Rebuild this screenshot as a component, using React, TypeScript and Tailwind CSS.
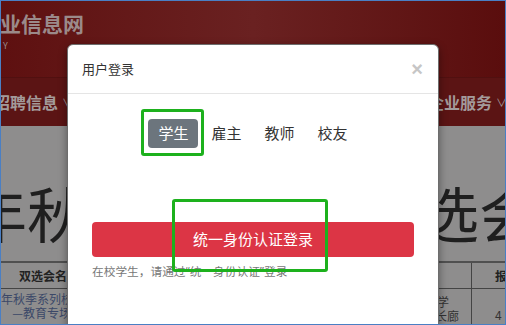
import React from "react";

const cjk = { fontFamily: '"Noto Sans CJK SC", "Noto Sans", sans-serif' };

function PageBehind() {
  return (
    <div className="flex flex-col w-full h-full">
      {/* header */}
      <div className="h-[79px] bg-gradient-to-r from-[#5e1010] via-[#6a2121] to-[#5a0d0d] flex flex-col pt-[8px]">
        <div className="ml-[-22px] text-[21px] font-bold leading-[28px] text-[#9b8a8a] whitespace-nowrap">就业信息网</div>
        <div className="pl-[2px] mt-[4px] text-[9px] leading-[10px] text-[#9b8a8a]">Y</div>
      </div>
      {/* nav */}
      <div className="h-[52px] bg-[#5b1414] border-t border-[#511010] flex items-center justify-between">
        <div className="ml-[-7px] flex items-center gap-[4px] text-[16px] font-bold text-[#a39a9a] whitespace-nowrap">
          招聘信息<span className="text-[11px] font-normal">∨</span>
        </div>
        <div className="mr-[-2px] flex items-center gap-[4px] text-[16px] font-bold text-[#a39a9a] whitespace-nowrap">
          企业服务<span className="text-[11px] font-normal">∨</span>
        </div>
      </div>
      {/* content */}
      <div className="flex-1 bg-[#8e8d8d] flex flex-col">
        <div className="h-[135px] flex justify-between items-start pt-[54px] overflow-hidden">
          <div className="ml-[-34px] text-[60px] leading-[64px] text-[#1f1f1f] whitespace-nowrap">年秋</div>
          <div className="mr-[-34px] text-[60px] leading-[64px] text-[#1f1f1f] whitespace-nowrap">选会</div>
        </div>
        <div className="border-t-2 border-[#505050] grid grid-cols-[68px_1fr_35px_33px]">
          <div className="h-[25px] pl-[18px] flex items-center text-[12px] font-bold text-[#222] whitespace-nowrap overflow-hidden">双选会名称</div>
          <div />
          <div className="border-r border-[#444]" />
          <div className="h-[25px] pl-[23px] flex items-center text-[12px] font-bold text-[#222] whitespace-nowrap overflow-hidden">报名</div>
          <div className="col-span-4 border-t border-[#444]" />
          <div className="pt-[3px] flex flex-col items-end text-[12px] leading-[14px] text-[#3b4868] whitespace-nowrap overflow-hidden">
            <span className="mr-[-4px]">4年秋季系列校</span>
            <span className="mr-[-2px]">—教育专场</span>
          </div>
          <div />
          <div className="border-r border-[#444] pt-[6px] flex flex-col text-[12px] leading-[14px] text-[#333] whitespace-nowrap overflow-hidden">
            <span>学</span>
            <span className="ml-[-2px]">长廊</span>
          </div>
          <div className="pl-[23px] pt-[17px] text-[12px] text-[#333]">4</div>
        </div>
      </div>
    </div>
  );
}

export default function App() {
  const tabs = ["学生", "雇主", "教师", "校友"];
  return (
    <div className="relative w-[506px] h-[325px] overflow-hidden border border-[#4a7fc4]" style={cjk}>
      <PageBehind />

      {/* modal */}
      <div className="absolute left-[66px] top-[43px] w-[372px] h-[300px] bg-white rounded-[6px] border border-[#6d6d6d] shadow-[0_3px_9px_rgba(0,0,0,0.4)]">
        <div className="h-[49px] px-[14px] flex items-center justify-between border-b border-[#e5e5e5]">
          <span className="text-[13px] text-[#333]">用户登录</span>
          <span className="font-['Liberation_Sans',sans-serif] text-[20px] font-bold leading-none text-[#c6c6c6] mr-[1px]">×</span>
        </div>
        <div className="pt-[25px] flex justify-center gap-[3px]">
          {tabs.map((t, i) => (
            <div
              key={t}
              className={
                i === 0
                  ? "h-[29px] px-[10px] flex items-center rounded-[4px] bg-[#6c757d] text-white text-[15px]"
                  : "h-[29px] px-[10px] flex items-center rounded-[4px] text-[#333] text-[15px]"
              }
            >
              {t}
            </div>
          ))}
        </div>
        <div className="mt-[74px] mx-[24px] h-[35px] rounded-[4px] bg-[#dc3545] flex items-center justify-center text-[15px] text-white">
          统一身份认证登录
        </div>
        <div className="mt-[6px] ml-[24px] font-['Noto_Sans','Noto_Sans_CJK_SC',sans-serif] text-[11.7px] leading-[16px] text-[#777] whitespace-nowrap">
          在校学生，请通过“统一身份认证”登录
        </div>
      </div>

      {/* annotation boxes */}
      <div className="absolute left-[140px] top-[108px] w-[63px] h-[47px] border-[3px] border-[#1db11d] rounded-[3px]" />
      <div className="absolute left-[171px] top-[198px] w-[156px] h-[73px] border-[3px] border-[#1db11d] rounded-[3px]" />
    </div>
  );
}
